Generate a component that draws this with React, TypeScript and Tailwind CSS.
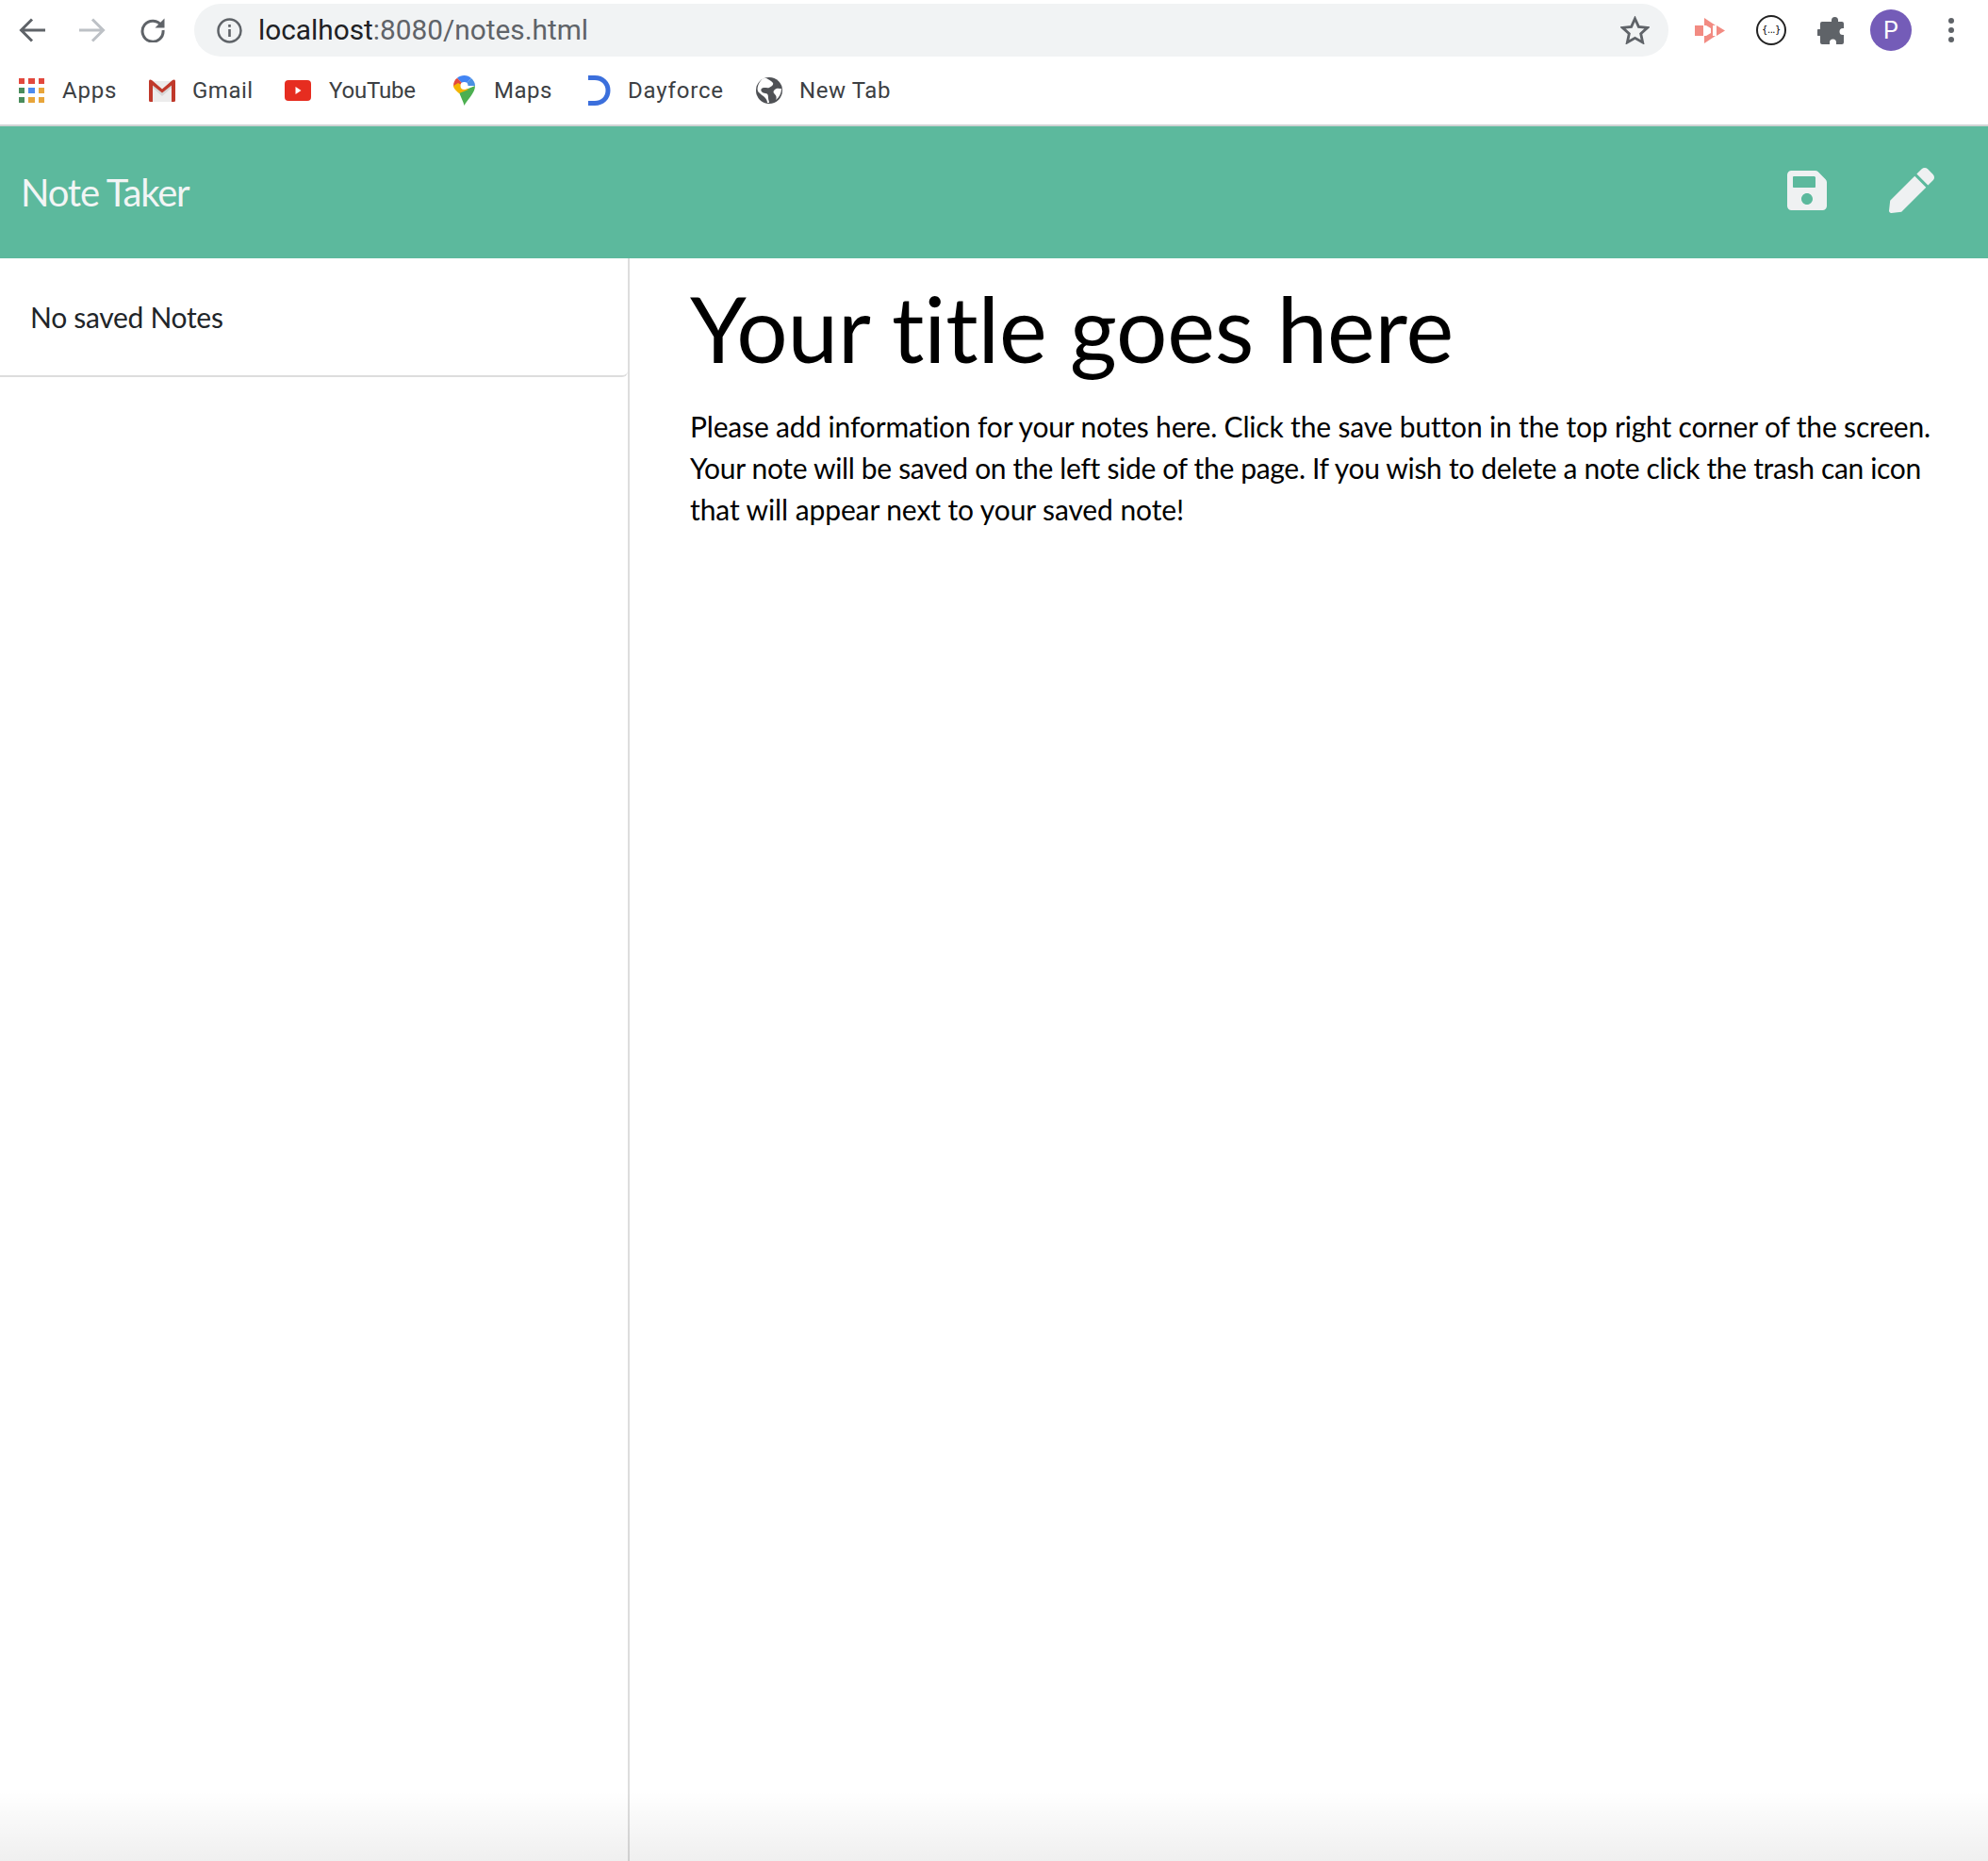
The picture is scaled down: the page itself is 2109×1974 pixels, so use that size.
import React from "react";
import { FaSave, FaPen } from "react-icons/fa";

function Back({ c }: { c: string }) {
  return (
    <svg width="28" height="28" viewBox="0 0 28 28" fill="none" stroke={c} strokeWidth="3">
      <path d="M28 14H3M14 2.500 2.500 14 14 25.500" />
    </svg>
  );
}

function Apps() {
  const colors = ["#e2483d", "#e2483d", "#e2483d", "#4a8c5c", "#4c8bf0", "#e8a53a", "#4a8c5c", "#e8a53a", "#e8a53a"];
  return (
    <div className="grid h-[26px] w-[27px] grid-cols-3 gap-[4px]">
      {colors.map((c, i) => (
        <span key={i} style={{ background: c }} />
      ))}
    </div>
  );
}

function Gmail() {
  return (
    <svg width="28" height="24" viewBox="0 0 28 24">
      <path d="M3 2h22v22H3z" fill="#ececec" />
      <path d="M4 5 14 14 24 5v4L14 18 4 9z" fill="#d6d6d6" />
      <path d="M0 2C0 .500 1.500 0 3 1L14 10.500 25 1C26.500 0 28 .500 28 2V22.500A1.500 1.500 0 0 1 26.500 24H24V6.500L14 14.500 4 6.500V24H1.500A1.500 1.500 0 0 1 0 22.500z" fill="#c0392b" />
    </svg>
  );
}

function YouTube() {
  return (
    <svg width="28" height="22" viewBox="0 0 28 22">
      <rect width="28" height="22" rx="4" fill="#e62d20" />
      <path d="M11.500 7v8l6-4z" fill="#fff" />
    </svg>
  );
}

function Maps() {
  return (
    <svg width="23" height="32" viewBox="0 0 23 32">
      <path d="M4 2.800C6 1 8.500 0 11.500 0 14.500 0 17 1 19 3L11.500 11z" fill="#4285f4" />
      <path d="M0 11C0 7.500 1.500 4.500 4 2.800L9 8 3 15z" fill="#e2483d" />
      <path d="M19 3C21.500 5 23 8 23 11L11.500 11z" fill="#4a90e2" />
      <path d="M6 18 23 11C23 19 15 25 11.500 32 10.500 28 8 23 6 18z" fill="#4caf50" />
      <path d="M6 19C3 16 0 14 0 11L5 8 16 15z" fill="#f4b400" />
      <circle cx="11.500" cy="11" r="4" fill="#fff" />
    </svg>
  );
}

function Dayforce() {
  return (
    <svg width="24" height="32" viewBox="0 0 24 32" fill="none">
      <path d="M0 2.500h7C15 2.500 21 8 21 16S15 29.500 7 29.500H0" stroke="#3b6fdc" strokeWidth="5" />
    </svg>
  );
}

function Globe() {
  return (
    <svg width="28" height="28" viewBox="0 0 28 28">
      <circle cx="14" cy="14" r="14" fill="#4f5155" />
      <path d="M11 1c3 2 6 3 7 5s-2 4-4 5-6-1-8 1 1 5 4 5 3 3 3 5 1 3 1 5h-2c0-3-2-5-3-6s-4-3-6-5-2-6 1-11 5-4 7-4zM27 12c-2 0-5-1-7 1s-2 3 0 5 2 4 1 6c4-3 6-8 6-12z" fill="#fff" />
    </svg>
  );
}

function Bookmark({ icon, label, iconW, gap, w, track }: { icon: React.ReactNode; label: string; iconW: string; gap: string; w: string; track: string }) {
  return (
    <div className={`flex items-center ${w}`}>
      <div className={`flex justify-center ${iconW} ${gap}`}>{icon}</div>
      <span className={`whitespace-nowrap font-['Roboto',sans-serif] text-[24px] leading-none text-[#3c4043] ${track}`}>{label}</span>
    </div>
  );
}

export default function App() {
  return (
    <div className="relative flex h-[1974px] flex-col overflow-hidden bg-white font-['Lato',sans-serif]">
      <div className="flex h-[64px] items-center">
        <div className="ml-[20px] flex w-[156px] items-center justify-between">
          <Back c="#5f6368" />
          <div className="scale-x-[-1]"><Back c="#bdc1c6" /></div>
          <svg className="-mt-[2px]" width="28" height="28" viewBox="0 0 28 28" fill="none">
            <path d="M23.500 10.500A11 11 0 1 0 25 15" stroke="#5f6368" strokeWidth="3" />
            <path d="M26.500 2.500V12.500H16.500z" fill="#5f6368" />
          </svg>
        </div>
        <div className="ml-[30px] flex h-[56px] w-[1564px] items-center rounded-[28px] bg-[#f1f3f4] pl-[24px]">
          <svg width="27" height="27" viewBox="0 0 27 27" fill="none">
            <circle cx="13.500" cy="13.500" r="12" stroke="#5f6368" strokeWidth="2.500" />
            <rect x="12.200" y="12" width="2.600" height="8" fill="#5f6368" />
            <rect x="12.200" y="7" width="2.600" height="2.800" fill="#5f6368" />
          </svg>
          <div className="ml-[17px] flex-1 font-['Roboto',sans-serif] text-[29.800px] leading-none text-[#202124]">
            localhost<span className="text-[#5f6368]">:8080/notes.html</span>
          </div>
          <svg className="mr-[20px]" width="31" height="30" viewBox="0 0 24 23" fill="none">
            <path d="m12 2 3 6.700 7.200.8-5.400 4.900 1.500 7.100L12 17.900l-6.300 3.600 1.500-7.100L1.800 9.500 9 8.700z" stroke="#5f6368" strokeWidth="2.200" />
          </svg>
        </div>
        <svg className="ml-[28px]" width="32" height="27" viewBox="0 0 32 27" fill="#f28b82">
          <path d="M0 8h9v11H0zM10 0 22 8h-3v11h3L10 27v-8h2l5-3v-5l-5-3h-2zM23 8l9 5.500-9 5.500z" />
        </svg>
        <div className="ml-[33px] flex h-[32px] w-[32px] items-center justify-center rounded-full border-2 border-[#222] font-['DejaVu_Sans',sans-serif] text-[10px] leading-none tracking-[-0.5px] text-black">
          {"{...}"}
        </div>
        <svg className="ml-[33px]" width="30" height="29" viewBox="0 0 30 29" fill="#5f6368">
          <path d="M10 5h5V3.500a3.500 3.500 0 0 1 7 0V5h4a2 2 0 0 1 2 2v5h-1a3.500 3.500 0 0 0 0 7h1v8a2 2 0 0 1-2 2h-6v-2a3.500 3.500 0 0 0-7 0v2H5a2 2 0 0 1-2-2v-7H1.500a3.500 3.500 0 0 1 0-7H3V7a2 2 0 0 1 2-2z" />
        </svg>
        <div className="ml-[26px] flex h-[44px] w-[44px] items-center justify-center rounded-full bg-[#745cb8] font-['Roboto',sans-serif] text-[25px] leading-none text-white">
          P
        </div>
        <div className="ml-[39px] flex flex-col gap-[4px]">
          <span className="h-[6px] w-[6px] rounded-full bg-[#5f6368]" />
          <span className="h-[6px] w-[6px] rounded-full bg-[#5f6368]" />
          <span className="h-[6px] w-[6px] rounded-full bg-[#5f6368]" />
        </div>
      </div>
      <div className="flex h-[68px] items-center pb-[4px] pl-[20px]">
        <Bookmark icon={<Apps />} label="Apps" iconW="w-[27px]" gap="mr-[19px]" w="w-[138px]" track="tracking-[0.8px]" />
        <Bookmark icon={<Gmail />} label="Gmail" iconW="w-[28px]" gap="mr-[18px]" w="w-[144px]" track="tracking-[0.5px]" />
        <Bookmark icon={<YouTube />} label="YouTube" iconW="w-[28px]" gap="mr-[19px]" w="w-[179px]" track="tracking-[-0.2px]" />
        <Bookmark icon={<Maps />} label="Maps" iconW="w-[23px]" gap="mr-[20px]" w="w-[143px]" track="tracking-[0.5px]" />
        <Bookmark icon={<Dayforce />} label="Dayforce" iconW="w-[24px]" gap="mr-[18px]" w="w-[178px]" track="tracking-[0.8px]" />
        <Bookmark icon={<Globe />} label="New Tab" iconW="w-[28px]" gap="mr-[18px]" w="w-[160px]" track="tracking-[0.6px]" />
      </div>
      <div className="h-[2px] bg-[#d0d3d4]" />
      <nav className="flex h-[140px] items-center justify-between bg-[#5cb99d] pl-[22px] pr-[57px]">
        <span className="text-[40px] leading-none tracking-[-1.200px] text-[#f2f5f5]">Note Taker</span>
        <div className="-mt-[4px] flex items-center gap-[66px]">
          <FaSave className="h-[48px] w-[42px] text-[#eff1f2]" />
          <FaPen className="h-[48px] w-[48px] text-[#eff1f2]" />
        </div>
      </nav>
      <div className="flex flex-1">
        <aside className="w-[668px] border-r-2 border-[#ddd]">
          <div className="flex h-[126px] items-center rounded-br-[6px] border-b-2 border-[#ddd] pl-[32px] text-[30px] tracking-[-0.300px] text-[#212529]">
            No saved Notes
          </div>
        </aside>
        <main className="flex-1 pl-[64px] pt-[17px] text-black">
          <h1 className="text-[96px] leading-[114px] tracking-[-0.150px]">Your title goes here</h1>
          <p className="mt-[25px] w-[1340px] text-[30px] leading-[44px] tracking-[-0.170px]">
            Please add information for your notes here. Click the save button in the top right corner of the screen.{" "}
            <span className="tracking-[-0.330px]">Your note will be saved on the left side of the page. If you wish to delete a note click the trash can icon</span>{" "}
            <span className="tracking-[-0.100px]">that will appear next to your saved note!</span>
          </p>
        </main>
      </div>
      <div className="pointer-events-none absolute inset-x-0 bottom-0 h-[74px] bg-gradient-to-b from-transparent to-[#00000010]" />
    </div>
  );
}
